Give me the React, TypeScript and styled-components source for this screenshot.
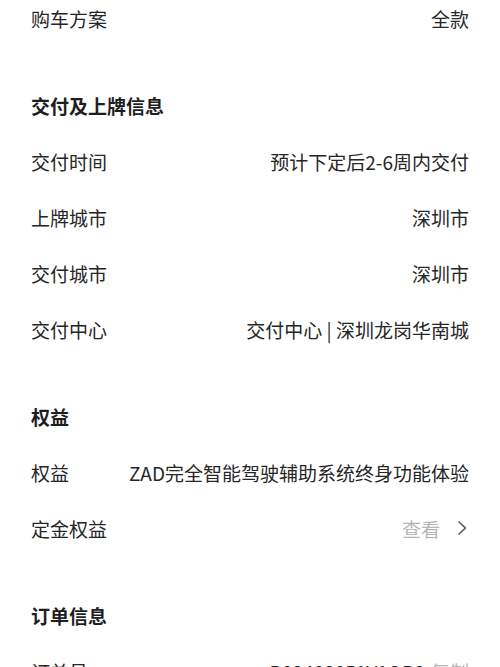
import React from "react";
import styled, { createGlobalStyle } from "styled-components";

const Global = createGlobalStyle`
  html, body { margin: 0; padding: 0; background: #fff; overflow: hidden; }
  body { font-family: "Noto Sans CJK SC", "Noto Sans", sans-serif; color: #222; }
`;

const Page = styled.div`
  display: flex;
  flex-direction: column;
  padding: 0 31px;
  margin-top: -10px;
`;

const Section = styled.section<{ $first?: boolean }>`
  display: flex;
  flex-direction: column;
  margin-top: ${(p) => (p.$first ? "0" : "31px")};
`;

const Header = styled.h2`
  margin: 0;
  height: 56px;
  display: flex;
  align-items: center;
  font-size: 19px;
  font-weight: 700;
  color: #1e1e1e;
`;

const Row = styled.div`
  height: 56px;
  display: flex;
  align-items: center;
  justify-content: space-between;
  font-size: 19px;
  color: #262626;
`;

const Label = styled.span`
  white-space: nowrap;
`;

const Value = styled.span`
  display: flex;
  align-items: center;
  gap: 6px;
  white-space: nowrap;
`;

const Muted = styled.span`
  color: #b5b5b5;
`;

const Chevron = () => (
  <svg width="12" height="18" viewBox="0 0 12 18" fill="none">
    <path d="M3 3 L9.5 9 L3 15" stroke="#555" strokeWidth="1.6" strokeLinecap="round" strokeLinejoin="round" />
  </svg>
);

const ChevronWrap = styled.span`
  display: flex;
  margin-left: 10px;
  margin-right: 1px;
`;

export default function App() {
  return (
    <>
      <Global />
      <Page>
        <Section $first>
          <Row>
            <Label>购车方案</Label>
            <Value>全款</Value>
          </Row>
        </Section>
        <Section>
          <Header>交付及上牌信息</Header>
          <Row>
            <Label>交付时间</Label>
            <Value>预计下定后2-6周内交付</Value>
          </Row>
          <Row>
            <Label>上牌城市</Label>
            <Value>深圳市</Value>
          </Row>
          <Row>
            <Label>交付城市</Label>
            <Value>深圳市</Value>
          </Row>
          <Row>
            <Label>交付中心</Label>
            <Value>交付中心 | 深圳龙岗华南城</Value>
          </Row>
        </Section>
        <Section>
          <Header>权益</Header>
          <Row>
            <Label>权益</Label>
            <Value>ZAD完全智能驾驶辅助系统终身功能体验</Value>
          </Row>
          <Row>
            <Label>定金权益</Label>
            <Value>
              <Muted>查看</Muted>
              <ChevronWrap>
                <Chevron />
              </ChevronWrap>
            </Value>
          </Row>
        </Section>
        <Section>
          <Header>订单信息</Header>
          <Row>
            <Label>订单号</Label>
            <Value>
              B02403051V1QB2<Muted>复制</Muted>
            </Value>
          </Row>
        </Section>
      </Page>
    </>
  );
}
